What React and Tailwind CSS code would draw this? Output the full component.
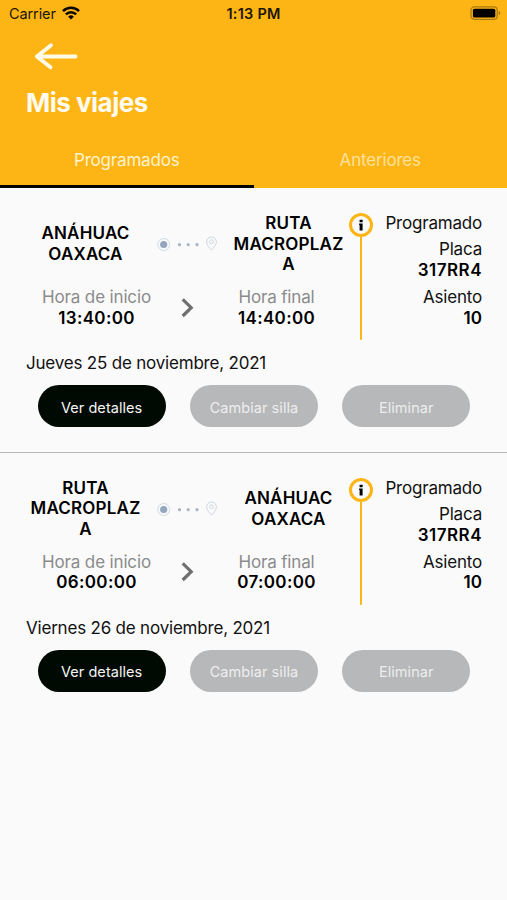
import React, { useState } from 'react';

const trips = [
	{
		id: 1,
		from: ['ANÁHUAC', 'OAXACA'],
		to: ['RUTA', 'MACROPLAZ', 'A'],
		start: '13:40:00',
		end: '14:40:00',
		date: 'Jueves 25 de noviembre, 2021',
		status: 'Programado',
		plate: '317RR4',
		seat: '10',
	},
	{
		id: 2,
		from: ['RUTA', 'MACROPLAZ', 'A'],
		to: ['ANÁHUAC', 'OAXACA'],
		start: '06:00:00',
		end: '07:00:00',
		date: 'Viernes 26 de noviembre, 2021',
		status: 'Programado',
		plate: '317RR4',
		seat: '10',
	},
];

const StatusBar = () => (
	<div className="relative flex h-7 items-center justify-between pl-[9px] pr-[6px] text-[#1c1503]">
		<div className="flex items-center gap-[6px]">
			<span className="text-[14.5px] tracking-[-0.1px]">Carrier</span>
			<svg className="-mt-[2px] h-[14px] w-[18px]" viewBox="0 0 18 14" fill="none" stroke="#0b0800" strokeWidth="2.6">
				<path d="M1 5.1a11.4 11.4 0 0 1 16 0" />
				<path d="M3.9 8.3a7.2 7.2 0 0 1 10.2 0" />
				<path d="M9 13.6 6.1 10.7a4.1 4.1 0 0 1 5.8 0Z" fill="#0b0800" stroke="none" />
			</svg>
		</div>
		<span className="absolute left-1/2 -translate-x-1/2 whitespace-nowrap text-[14.5px] font-semibold tracking-[0.25px]">1:13 PM</span>
		<svg className="-mt-[2px] h-[14px] w-[31px]" viewBox="0 0 31 14">
			<rect x="1" y="0.9" width="26.2" height="12.4" rx="3.4" fill="none" stroke="#ab7a10" strokeWidth="1.3" />
			<rect x="2.9" y="2.7" width="22.4" height="8.8" rx="1.6" fill="#000" />
			<path d="M28.7 5v4.2c1-.4 1.6-1.2 1.6-2.1S29.7 5.4 28.7 5Z" fill="#ab7a10" />
		</svg>
	</div>
);

const RouteIcon = () => (
	<svg className="h-4 w-[60px]" viewBox="0 0 60 16" fill="none">
		<circle cx="6.7" cy="8.5" r="6" stroke="#d3dae2" strokeWidth="1" />
		<circle cx="6.7" cy="8.5" r="3.6" fill="#93a6be" />
		<circle cx="22.5" cy="8.7" r="1.6" fill="#aab5c1" />
		<circle cx="31.2" cy="8.7" r="1.6" fill="#aab5c1" />
		<circle cx="40" cy="8.7" r="1.6" fill="#aab5c1" />
		<path d="M54.5 14.2c-1.7-2.2-4.9-5.1-4.9-8.3a4.9 4.9 0 0 1 9.8 0c0 3.2-3.2 6.1-4.9 8.3Z" stroke="#cfd6de" />
		<circle cx="54.5" cy="5.8" r="1.9" stroke="#cfd6de" />
	</svg>
);

const Place = ({ lines }) => (
	<div className="flex w-[119px] flex-col items-center font-semibold tracking-[0.2px] text-black">
		{lines.map((line) => <span key={line}>{line}</span>)}
	</div>
);

const Hour = ({ label, value }) => (
	<div className="flex w-[141px] flex-col items-center">
		<span className="tracking-[-0.15px] text-[#8b8b8b]">{label}</span>
		<span className="font-semibold tracking-[0.35px] text-black">{value}</span>
	</div>
);

const TripCard = ({ trip }) => (
	<div className="h-[264.7px] border-b border-[#b9b9b9] pt-[25px] last:border-transparent">
		<div className="flex pl-[26px] pr-[25px] text-[17px] leading-[20.7px]">
			<div className="w-[323px]">
				<div className="flex h-[62px] items-center">
					<Place lines={trip.from} />
					<div className="flex w-[84px] justify-center">
						<RouteIcon />
					</div>
					<Place lines={trip.to} />
				</div>
				<div className="mt-[12px] flex items-center">
					<Hour label="Hora de inicio" value={trip.start} />
					<svg className="h-[20px] w-[39px]" viewBox="0 0 39 20" fill="none" stroke="#6f6f6f" strokeWidth="3.2">
						<path d="M15.7 1.4 24.2 9.7 15.7 18" />
					</svg>
					<Hour label="Hora final" value={trip.end} />
				</div>
			</div>
			<div className="flex w-[24px] flex-col items-center">
				<div className="flex h-[24px] w-[24px] items-center justify-center rounded-full border-[3px] border-[#fdb515] text-black">
					<svg className="h-[14px] w-[8px]" viewBox="0 0 8 14">
						<rect x="2.6" y="1.8" width="3" height="2.4" rx="0.5" />
						<path d="M2.1 5.4h3.500v7H2.600V6.900h-.5Z" />
					</svg>
				</div>
				<div className="h-[103px] w-[2.5px] rounded-b bg-[#fdb515]" />
			</div>
			<div className="flex flex-1 flex-col items-end pt-[0.2px]">
				<span className="tracking-[-0.2px]">{trip.status}</span>
				<span className="mt-[5.3px] tracking-[-0.2px]">Placa</span>
				<span className="font-semibold tracking-[0.5px] text-black">{trip.plate}</span>
				<span className="mt-[6.3px] tracking-[-0.2px]">Asiento</span>
				<span className="font-semibold text-black">{trip.seat}</span>
			</div>
		</div>
		<p className="mt-[13px] pl-[26px] text-[17px] leading-[21px] tracking-[-0.2px]">{trip.date}</p>
		<div className="mt-[11.4px] flex gap-6 pl-[37.5px] text-[14.5px] tracking-[0.06px]">
			<button className="h-[42px] w-[128.3px] rounded-full bg-[#010a02] pt-[2px] text-[#f4f4f4]">Ver detalles</button>
			<button className="h-[42px] w-[128.3px] rounded-full bg-[#b6b8b9] pt-[2px] text-[#eeeeee]">Cambiar silla</button>
			<button className="h-[42px] w-[128.3px] rounded-full bg-[#b6b8b9] pt-[2px] text-[#eeeeee]">Eliminar</button>
		</div>
	</div>
);

function App() {
	const [tab, setTab] = useState(1);

	return (
		<div className="min-h-[900px] w-full bg-[#fafafa] font-[Inter,sans-serif] text-[#111111]">
			<header className="flex h-[188px] flex-col bg-[#fdb515]">
				<StatusBar />
				<button className="ml-[34px] mt-[14px] w-[45px]" aria-label="Volver">
					<svg className="h-[28px] w-[45px]" viewBox="0 0 45 28" fill="none" stroke="#fffbe9" strokeWidth="3.9" strokeLinecap="round" strokeLinejoin="round">
						<path d="M41.5 14.5H2.9M17 3.2 2.9 14.5 16.500 25.200" />
					</svg>
				</button>
				<h1 className="ml-[26px] mt-[17px] text-[26px] font-bold leading-[32px] tracking-[-0.5px] text-[#fffbee]">Mis viajes</h1>
				<div className="mt-auto flex h-[57px] text-[17px] tracking-[-0.18px]">
					<button onClick={() => setTab(1)} className={`${tab === 1 ? 'border-black text-[#fff3cf]' : 'border-transparent text-[#fee09a]'} flex-1 border-b-[3px] pt-[5px]`}>Programados</button>
					<button onClick={() => setTab(2)} className={`${tab === 2 ? 'border-black text-[#fff3cf]' : 'border-transparent text-[#fee09a]'} flex-1 border-b-[3px] pt-[5px]`}>Anteriores</button>
				</div>
			</header>
			{tab === 1 && trips.map((trip) => <TripCard key={trip.id} trip={trip} />)}
		</div>
	);
}

export default App;
